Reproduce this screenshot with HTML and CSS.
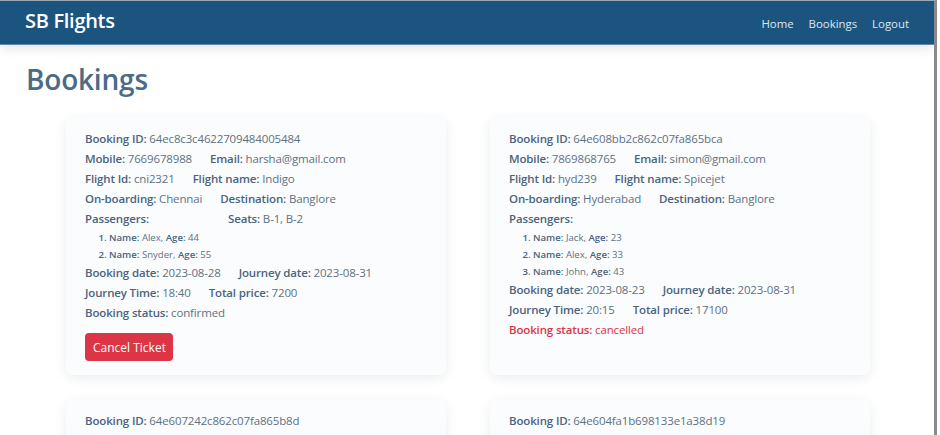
FILE: index.html
```html
<!DOCTYPE html>
<html>
<head>
<meta charset="utf-8">
<link rel="stylesheet" href="styles.css">
</head>
<body>
<div class="frame">
  <nav class="navbar">
    <div class="brand">SB Flights</div>
    <div class="links">
      <span>Home</span>
      <span>Bookings</span>
      <span>Logout</span>
    </div>
  </nav>
  <main class="page">
    <h1 class="title">Bookings</h1>
    <div class="grid">
      <div class="card">
        <div class="row"><span><b>Booking ID:</b> 64ec8c3c4622709484005484</span></div>
        <div class="row"><span><b>Mobile:</b> 7669678988</span><span><b>Email:</b> harsha@gmail.com</span></div>
        <div class="row"><span><b>Flight Id:</b> cni2321</span><span><b>Flight name:</b> Indigo</span></div>
        <div class="row"><span><b>On-boarding:</b> Chennai</span><span><b>Destination:</b> Banglore</span></div>
        <div class="row"><span class="pass"><b>Passengers:</b></span><span><b>Seats:</b> B-1, B-2</span></div>
        <ol class="plist">
          <li><b>Name:</b> Alex, <b>Age:</b> 44</li>
          <li><b>Name:</b> Snyder, <b>Age:</b> 55</li>
        </ol>
        <div class="row"><span><b>Booking date:</b> 2023-08-28</span><span><b>Journey date:</b> 2023-08-31</span></div>
        <div class="row"><span><b>Journey Time:</b> 18:40</span><span><b>Total price:</b> 7200</span></div>
        <div class="row"><span><b>Booking status:</b> confirmed</span></div>
        <button class="btn">Cancel Ticket</button>
      </div>
      <div class="card">
        <div class="row"><span><b>Booking ID:</b> 64e608bb2c862c07fa865bca</span></div>
        <div class="row"><span><b>Mobile:</b> 7869868765</span><span><b>Email:</b> simon@gmail.com</span></div>
        <div class="row"><span><b>Flight Id:</b> hyd239</span><span><b>Flight name:</b> Spicejet</span></div>
        <div class="row"><span><b>On-boarding:</b> Hyderabad</span><span><b>Destination:</b> Banglore</span></div>
        <div class="row"><span class="pass"><b>Passengers:</b></span></div>
        <ol class="plist">
          <li><b>Name:</b> Jack, <b>Age:</b> 23</li>
          <li><b>Name:</b> Alex, <b>Age:</b> 33</li>
          <li><b>Name:</b> John, <b>Age:</b> 43</li>
        </ol>
        <div class="row"><span><b>Booking date:</b> 2023-08-23</span><span><b>Journey date:</b> 2023-08-31</span></div>
        <div class="row"><span><b>Journey Time:</b> 20:15</span><span><b>Total price:</b> 17100</span></div>
        <div class="row cancelled"><span><b>Booking status:</b> cancelled</span></div>
      </div>
      <div class="card">
        <div class="row"><span><b>Booking ID:</b> 64e607242c862c07fa865b8d</span></div>
      </div>
      <div class="card">
        <div class="row"><span><b>Booking ID:</b> 64e604fa1b698133e1a38d19</span></div>
      </div>
    </div>
  </main>
</div>
</body>
</html>
```

FILE: styles.css
```css
html, body {
  margin: 0;
  padding: 0;
  background: #ffffff;
  overflow: hidden;
}
body {
  font-family: "Open Sans", "Noto Sans", sans-serif;
  width: 940px;
  height: 435px;
}
.frame {
  width: 937px;
  height: 435px;
  border-right: 3px solid #8a8a8a;
  border-top: 1px solid #9aa9b6;
  box-sizing: border-box;
  overflow: hidden;
}
.navbar {
  height: 43px;
  background: #1c5480;
  display: flex;
  align-items: center;
  justify-content: space-between;
  padding: 0 25px 0 25px;
  box-shadow: 0 4px 10px rgba(30, 60, 90, 0.12);
  border-bottom: 1px solid #5f88aa;
  position: relative;
}
.brand {
  color: #ffffff;
  font-weight: 600;
  font-size: 20px;
  letter-spacing: -0.3px;
  margin-top: -4px;
}
.links {
  display: flex;
  gap: 15px;
  color: #dfe7ef;
  font-size: 11.4px;
  margin-top: 1px;
}
.page {
  padding: 0 0 0 26px;
}
.title {
  margin: 14px 0 0 0;
  font-size: 28px;
  font-weight: 600;
  color: #4b6b86;
  letter-spacing: -0.2px;
  line-height: 40px;
}
.grid {
  display: grid;
  grid-template-columns: 380px 380px;
  column-gap: 44px;
  row-gap: 24px;
  margin: 18px 0 0 40px;
}
.card {
  background: #fbfcfd;
  border-radius: 8px;
  box-shadow: 0 3px 12px rgba(30, 50, 70, 0.09);
  padding: 12px 18px 14px 19px;
}
.row {
  display: flex;
  gap: 18px;
  font-size: 11.5px;
  line-height: 20px;
  color: #5e7182;
  letter-spacing: -0.15px;
  white-space: nowrap;
}
.row b {
  color: #4a647d;
  font-weight: 600;
}
.pass {
  width: 125px;
}
.cancelled, .cancelled b {
  color: #dc3545;
}
.plist {
  margin: 0;
  padding: 0 0 0 24px;
  font-size: 9.6px;
  line-height: 17px;
  color: #5e7182;
}
.plist li::marker {
  color: #4a647d;
  font-weight: 600;
}
.plist b {
  color: #4a647d;
  font-weight: 600;
}
.btn {
  margin-top: 10px;
  display: block;
  background: #dc3545;
  color: #ffffff;
  border: none;
  border-radius: 4px;
  font-family: "Open Sans", sans-serif;
  font-size: 12px;
  height: 28px;
  padding: 0 8px;
  width: 88px;
  white-space: nowrap;
}
```
